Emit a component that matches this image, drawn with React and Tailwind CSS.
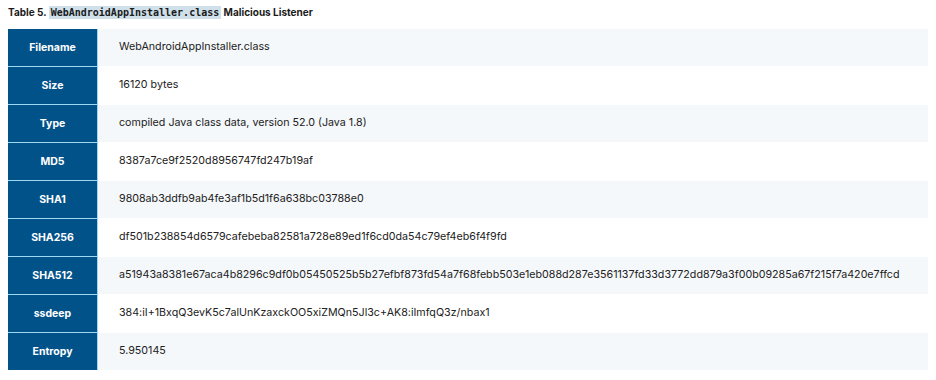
const rows = [
  ['Filename', 'WebAndroidAppInstaller.class'],
  ['Size', '16120 bytes'],
  ['Type', 'compiled Java class data, version 52.0 (Java 1.8)'],
  ['MD5', '8387a7ce9f2520d8956747fd247b19af'],
  ['SHA1', '9808ab3ddfb9ab4fe3af1b5d1f6a638bc03788e0'],
  ['SHA256', 'df501b238854d6579cafebeba82581a728e89ed1f6cd0da54c79ef4eb6f4f9fd'],
  ['SHA512', 'a51943a8381e67aca4b8296c9df0b05450525b5b27efbf873fd54a7f68febb503e1eb088d287e3561137fd33d3772dd879a3f00b09285a67f215f7a420e7ffcd'],
  ['ssdeep', '384:iI+1BxqQ3evK5c7alUnKzaxckOO5xiZMQn5Jl3c+AK8:iImfqQ3z/nbax1'],
  ['Entropy', '5.950145'],
];

export default function App() {
  return (
    <div className="w-[936px] h-[380px] bg-white px-2 pt-[5px]" style={{ fontFamily: 'Inter, "Noto Sans", sans-serif' }}>
      <p className="text-[10px] font-bold text-[#1a1a1a] leading-[14px] mb-[9px]">
        Table 5.{' '}
        <code className="bg-[#cfe0ea] px-[2px] py-[1px] font-bold text-[10px]" style={{ fontFamily: '"DejaVu Sans Mono", monospace' }}>
          WebAndroidAppInstaller.class
        </code>{' '}
        Malicious Listener
      </p>
      <div className="w-[920px] flex flex-col">
        {rows.map(([k, v], i) => (
          <div key={k} className={`flex ${i === rows.length - 1 ? 'h-[37px]' : 'h-[38px]'}`}>
            <div className={`w-[90px] shrink-0 flex items-center justify-center bg-[#02528a] border-r border-[#9fd6f2] text-white text-[10.5px] font-bold ${i < rows.length - 1 ? 'border-b' : ''}`}>
              {k}
            </div>
            <div className={`flex-1 min-w-0 flex items-center pl-[21px] whitespace-nowrap text-[10.7px] text-[#222] ${i < rows.length - 1 ? 'border-b border-white' : ''} ${i % 2 === 0 ? 'bg-[#f5f8fb]' : 'bg-white'}`}>
              {v}
            </div>
          </div>
        ))}
      </div>
    </div>
  );
}
